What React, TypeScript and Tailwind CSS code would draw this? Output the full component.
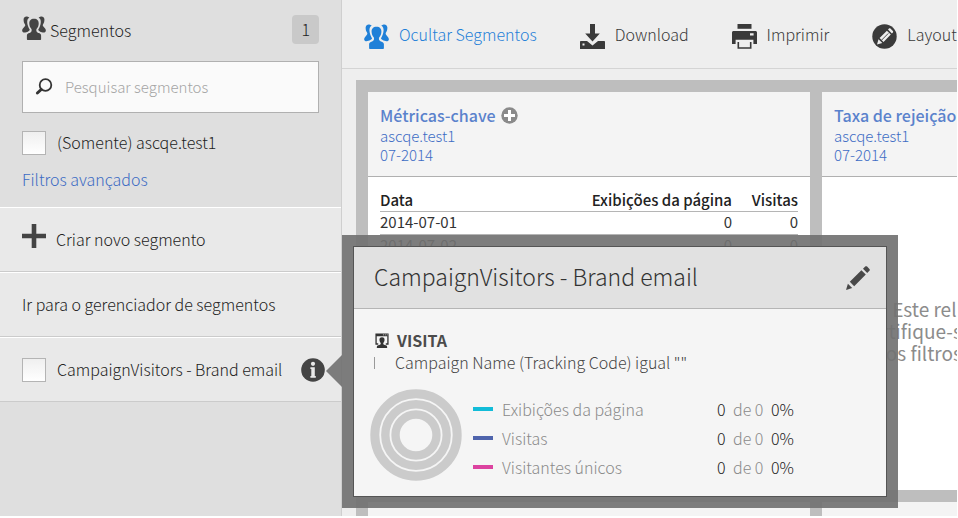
import type { ReactNode } from "react";

type IconProps = { className?: string };

function SegmentsIcon({ className }: IconProps) {
  const side =
    "M5.800 .8C4.200-.2 1.800 .7 1.600 3.200c-.1 2 .3 3.600 1.300 5 .5 .8 .4 1.700-.3 2.400L.9 12.600c-1 1-1.100 3.100 .2 3.700 1.300 .5 3.600-.1 5-.9 .9-.5 1.400-1 1.700-1.700C7 12.500 6.500 11.500 6 10 5.200 8 4.900 5.500 5.600 3.600 5.900 2.700 6.600 2 7.400 1.500z";
  return (
    <svg viewBox="0 0 24 24" className={className} fill="currentColor" aria-hidden="true">
      <path d={side} />
      <path d={side} transform="matrix(-1 0 0 1 24 0)" />
      <path d="M12 2.700c3.200 0 4.900 2 4.700 5-.1 2.100-.9 3.900-2 5.100-.4.600-.5 1.900-.1 2.600.4.800 1.300 1.300 2.400 1.700 1.400.5 1.900 1.200 2.100 2.300v3.600c0 .6-.4 1-1 1H5.900c-.6 0-1-.4-1-1v-3.600c.2-1.100.7-1.800 2.100-2.300 1.100-.4 2-.9 2.400-1.700.4-.7.300-2-.1-2.600-1.100-1.200-1.900-3-2-5.100-.2-3 1.500-5 4.700-5z" />
    </svg>
  );
}

function SearchIcon({ className }: IconProps) {
  return (
    <svg viewBox="0 0 18 18" className={className} fill="none" stroke="currentColor" aria-hidden="true">
      <circle cx="10.500" cy="7" r="5.800" strokeWidth="1.800" />
      <path d="M6.200 11.500 2.400 15" strokeWidth="3" strokeLinecap="round" />
    </svg>
  );
}

function PlusIcon({ className }: IconProps) {
  return (
    <svg viewBox="0 0 24 24" className={className} fill="currentColor" aria-hidden="true">
      <path d="M9.700 0h4.600v9.700H24v4.600h-9.700V24H9.700v-9.700H0V9.700h9.700z" />
    </svg>
  );
}

function InfoIcon({ className }: IconProps) {
  return (
    <svg viewBox="0 0 24 24" className={className} aria-hidden="true">
      <circle cx="12" cy="12" r="11.800" fill="currentColor" />
      <circle cx="12" cy="5.800" r="2.100" fill="#e9e9e9" />
      <path d="M9.400 9.300h4.400v8.700h1v1.700H9.400V18h.9v-7h-.9z" fill="#e9e9e9" />
    </svg>
  );
}

function DownloadIcon({ className }: IconProps) {
  return (
    <svg viewBox="0 0 25 25" className={className} fill="currentColor" aria-hidden="true">
      <path d="M10 0h5v9.500h4.800L12.500 17.600 5.200 9.500H10z" />
      <path fillRule="evenodd" d="M.8 17h6.200l5.500 4.600L18 17h6.200c.5 0 .8.300.8.800V25H0v-7.200c0-.5.300-.8.800-.8zM2.500 19.400v2h2v-2z" />
    </svg>
  );
}

function PrintIcon({ className }: IconProps) {
  return (
    <svg viewBox="0 0 25 25" className={className} fill="currentColor" aria-hidden="true">
      <path d="M5.500 0h14v4.800h-14z" />
      <path fillRule="evenodd" d="M1.500 7h22C24.300 7 25 7.700 25 8.500V20h-3.600v-4.300H3.600V20H0V8.500C0 7.700.7 7 1.500 7zM18 9.200v2.200h3.600V9.200z" />
      <path d="M5.500 18h1.600v5.200h10.800V18h1.600v6.700h-14z" />
    </svg>
  );
}

function LayoutIcon({ className }: IconProps) {
  return (
    <svg viewBox="0 0 25 25" className={className} aria-hidden="true">
      <circle cx="12.500" cy="12.500" r="12.200" fill="currentColor" />
      <path d="m5 20.500 1.500-5.300 3.800 3.800zM7.600 14l7.300-7.300 3.900 3.900-7.300 7.300zM16 5.600l1-1c.5-.4 1-.4 1.400 0l2.500 2.500c.4.400.4.900 0 1.400l-1 1z" fill="#eee" />
      <path d="m9.700 16 6.600-6.600" stroke="currentColor" strokeWidth="0.900" />
    </svg>
  );
}

function PencilIcon({ className }: IconProps) {
  return (
    <svg viewBox="0 0 24 24" className={className} fill="currentColor" aria-hidden="true">
      <path d="m0 24 1.900-6.200 4.300 4.300zM3.800 15.800 15.400 4.200l4.400 4.400L8.200 20.200zM17 2.800 19.200.6c.6-.6 1.300-.6 1.900 0L23.400 2.900c.6.600.6 1.300 0 1.900L21.200 7z" />
    </svg>
  );
}

function VisitIcon({ className }: IconProps) {
  return (
    <svg viewBox="0 0 16 17" className={className} fill="currentColor" aria-hidden="true">
      <path d="M1 .500h14v12h-3v-1.500h1.600V3.500H2.400V11H4v1.500H1z" />
      <path d="M8 4.500c2 0 2.900 1.300 2.700 3.100-.1 1.300-.6 2.200-1.300 3-.2.900 0 1.500.9 1.900l2.300.9c.7.300.9.900.9 2.600h-11c0-1.700.2-2.300.9-2.600l2.300-.9c.9-.4 1.100-1 .9-1.900-.7-.8-1.200-1.700-1.300-3C5.100 5.800 6 4.500 8 4.500z" />
      <path d="M9 1.500h1v1H9zM11 1.500h1v1h-1zM13 1.500h1v1h-1z" fill="#f5f5f5" />
    </svg>
  );
}

function AddCircleIcon({ className }: IconProps) {
  return (
    <svg viewBox="0 0 17 17" className={className} aria-hidden="true">
      <circle cx="8.500" cy="8.500" r="8.200" fill="currentColor" />
      <path d="M7 3h3v4h4v3h-4v4H7v-4H3V7h4z" fill="#fff" />
    </svg>
  );
}

function Rings({ className }: IconProps) {
  return (
    <svg viewBox="0 0 92 92" className={className} fill="none" stroke="#cbcbcb" aria-hidden="true">
      <circle cx="46" cy="46" r="41.200" strokeWidth="9" />
      <circle cx="46" cy="46" r="30.700" strokeWidth="8.400" />
      <circle cx="46" cy="46" r="20.500" strokeWidth="8.400" />
    </svg>
  );
}

const boxClass =
  "size-6 shrink-0 appearance-none border border-[#b4b4b4] bg-linear-to-b from-[#efefef] to-white";

const legend = [
  { label: "Exibições da página", swatch: "bg-[#12bcd8]" },
  { label: "Visitas", swatch: "bg-[#4f64ac]" },
  { label: "Visitantes únicos", swatch: "bg-[#dc43a0]" },
];

function SegmentPopover() {
  return (
    <div className="absolute -top-[103px] left-full ml-px w-[556px] bg-[#727272]/92 p-[11px]" role="dialog" aria-label="CampaignVisitors - Brand email">
      <div className="absolute top-[120px] right-full h-8 w-4 bg-[#727272]/92 [clip-path:polygon(100%_0,100%_100%,0_50%)]" />
      <div className="border border-[#555] bg-[#f5f5f5]">
        <header className="flex h-[62px] items-center justify-between border-b border-[#b5b5b5] bg-[#e1e1e1] pr-4 pl-5">
          <h2 className="pb-1 text-[23px] leading-7 text-[#333]">CampaignVisitors - Brand email</h2>
          <button type="button" aria-label="Editar" className="text-[#484848]">
            <PencilIcon className="size-6" />
          </button>
        </header>
        <div className="px-5 pt-5 pb-[15px]">
          <div className="flex h-6 items-center gap-[7px] leading-5">
            <VisitIcon className="size-4 text-[#333]" />
            <span className="pb-0.5 font-bold text-[#4b4b4b]">VISITA</span>
          </div>
          <div className="flex h-5 items-center gap-5 leading-5 text-[#444]">
            <span className="h-3 w-px bg-[#999]" />
            <span className="pb-0.5">Campaign Name (Tracking Code) igual ""</span>
          </div>
          <div className="mt-[15px] flex items-center gap-[11px]">
            <Rings className="-ml-1 size-[92px] shrink-0" />
            <ul className="mt-1.5">
              {legend.map((item) => (
                <li key={item.label} className="flex h-[29px] items-center text-[#8a8a8a]">
                  <span className={`mr-[9px] h-1 w-5 ${item.swatch}`} />
                  <span className="w-[215px]">{item.label}</span>
                  <span className="w-4 text-[#222]">0</span>
                  <span className="w-[38px]">de 0</span>
                  <span className="text-[#222]">0%</span>
                </li>
              ))}
            </ul>
          </div>
        </div>
      </div>
    </div>
  );
}

function Sidebar() {
  const row = "relative flex h-[65px] items-center border-t border-t-white border-b border-b-[#cbcbcb] bg-[#e9e9e9] px-[22px]";
  return (
    <aside className="relative z-10 w-[342px] shrink-0 border-r border-[#cfcfcf] bg-[#dfdfdf] text-base text-[#222]">
      <div className="flex h-[207px] flex-col px-[22px] pt-[15px]">
        <div className="flex h-[29px] items-center">
          <SegmentsIcon className="mb-1 size-6 text-[#444]" />
          <h1 className="pl-1">Segmentos</h1>
          <span className="ml-auto rounded bg-[#c9c9c9] px-[9px] leading-[29px]">1</span>
        </div>
        <label className="mt-[17px] flex h-[52px] items-center border border-[#b0b0b0] bg-[#fafafa] pl-3">
          <SearchIcon className="size-[18px] shrink-0 text-[#333]" />
          <input type="search" aria-label="Pesquisar segmentos" placeholder="Pesquisar segmentos" className="min-w-0 flex-1 bg-transparent pl-3 text-[15px] outline-none placeholder:text-[#a5a5a5]" />
        </label>
        <label className="mt-[18px] flex h-6 items-center gap-[11px]">
          <input type="checkbox" className={boxClass} />
          <span className="pb-0.5">(Somente) ascqe.test1</span>
        </label>
        <a href="#filtros" className="mt-3 self-start text-[#3d6cc4]">Filtros avançados</a>
      </div>
      <button type="button" className={`${row} w-full gap-2.5`}>
        <PlusIcon className="mb-2 size-6 text-[#444]" />
        <span className="pb-0.5">Criar novo segmento</span>
      </button>
      <div className={row}>
        <a href="#gerenciador" className="pb-0.5">Ir para o gerenciador de segmentos</a>
      </div>
      <div className={row}>
        <label className="flex items-center gap-[11px]">
          <input type="checkbox" className={boxClass} />
          <span className="pb-0.5">CampaignVisitors - Brand email</span>
        </label>
        <button type="button" aria-label="Informações" className="-mr-1.5 ml-auto text-[#444]">
          <InfoIcon className="size-6" />
        </button>
        <SegmentPopover />
      </div>
    </aside>
  );
}

function ToolButton({ icon, label, active = false }: { icon: ReactNode; label: string; active?: boolean }) {
  return (
    <button type="button" className={`flex shrink-0 items-center gap-2.5 ${active ? "text-[#1f80d8]" : "text-[#3a3a3a]"}`}>
      {icon}
      <span className="pb-1">{label}</span>
    </button>
  );
}

function Panel({ title, add = false, children }: { title: string; add?: boolean; children?: ReactNode }) {
  return (
    <section className="h-[398px] bg-white">
      <header className="h-[85px] border-b border-[#b0b0b0] bg-[#f4f4f4] px-3 pt-3 text-[15px] leading-[19px] text-[#3d6cc4]">
        <div className="flex items-center gap-[5px]">
          <h2 className="text-base leading-[22px] font-medium text-[#5a82cc]">{title}</h2>
          {add && (
            <button type="button" aria-label="Adicionar" className="text-[#8a8a8a]">
              <AddCircleIcon className="size-[17px]" />
            </button>
          )}
        </div>
        <a href="#suite" className="block">ascqe.test1</a>
        <a href="#periodo" className="block">07-2014</a>
      </header>
      {children}
    </section>
  );
}

function KeyMetrics() {
  return (
    <div className="px-3 pt-3">
      <table className="w-full text-[15px] text-[#333]">
        <thead>
          <tr className="border-b border-[#b5b5b5] leading-[22px] text-[#222]">
            <th className="text-left font-medium">Data</th>
            <th className="text-right font-medium">Exibições da página</th>
            <th className="w-[66px] text-right font-medium">Visitas</th>
          </tr>
        </thead>
        <tbody className="leading-5 font-normal">
          {["2014-07-01", "2014-07-02"].map((day) => (
            <tr key={day} className="border-b border-[#b5b5b5]">
              <td className="pb-0.5">{day}</td>
              <td className="pb-0.5 text-right">0</td>
              <td className="pb-0.5 text-right">0</td>
            </tr>
          ))}
        </tbody>
      </table>
    </div>
  );
}

export default function App() {
  return (
    <div className="flex h-screen overflow-hidden bg-white pr-px pb-0.5 font-['Noto_Sans_CJK_SC',sans-serif] font-light">
      <Sidebar />
      <main className="min-w-0 flex-1 overflow-hidden bg-[#eee]">
        <nav className="flex h-[69px] items-center gap-[43px] border-b border-[#d4d4d4] pt-1 pl-[22px] text-base whitespace-nowrap">
          <ToolButton active icon={<SegmentsIcon className="size-[25px]" />} label="Ocultar Segmentos" />
          <ToolButton icon={<DownloadIcon className="size-[25px]" />} label="Download" />
          <ToolButton icon={<PrintIcon className="size-[25px]" />} label="Imprimir" />
          <ToolButton icon={<LayoutIcon className="size-[25px]" />} label="Layout" />
        </nav>
        <div className="mt-[11px] ml-3.5 grid w-max grid-cols-[442px_442px] gap-3 bg-[#bebebe] p-3">
          <Panel title="Métricas-chave" add>
            <KeyMetrics />
          </Panel>
          <Panel title="Taxa de rejeição">
            <p className="pt-[121px] text-center text-[19px] leading-[22px] font-normal whitespace-nowrap text-[#8c8c8c]">
              Este relatório não contém dados...
              <br />
              Certifique-se de que a métrica, a data e os
              <br />
              os filtros selecionados são corretos.
            </p>
          </Panel>
          <section className="h-20 bg-[#f4f4f4]" />
          <section className="h-20 bg-[#f4f4f4]" />
        </div>
      </main>
    </div>
  );
}
